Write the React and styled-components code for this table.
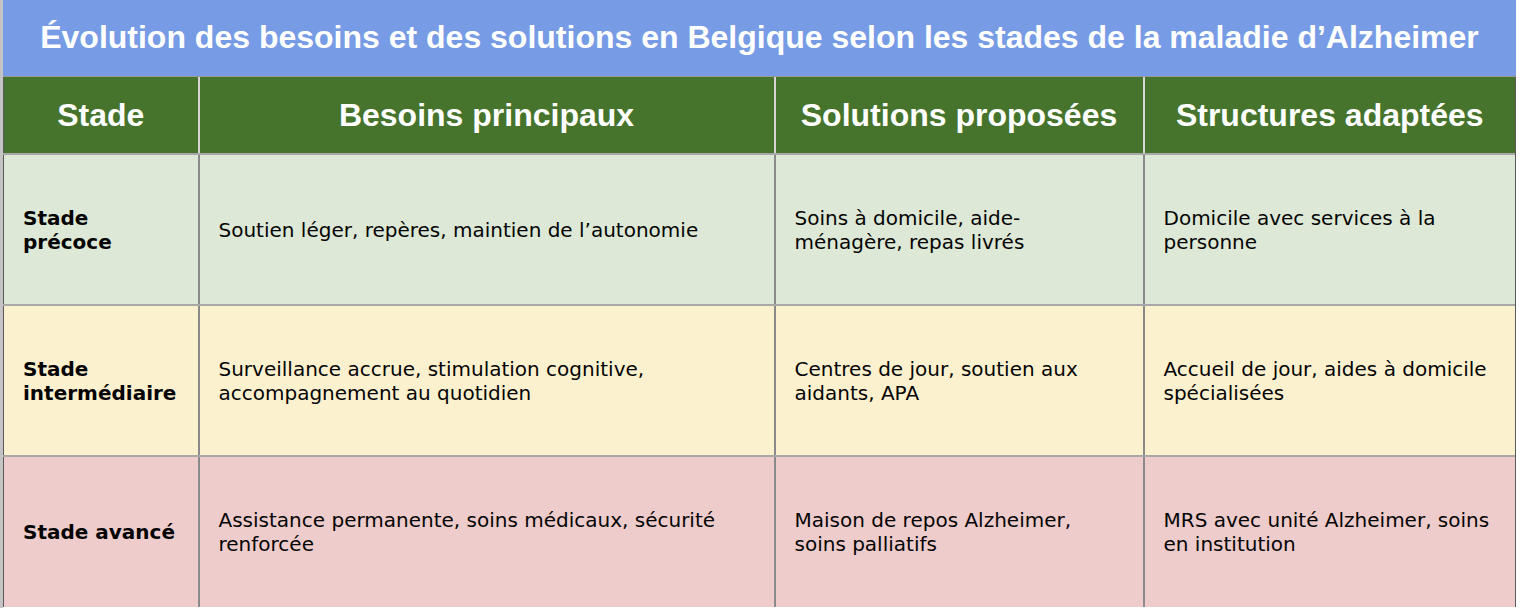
import styled, { createGlobalStyle } from 'styled-components'

const rows = [
    {
        stage: 'Stade précoce',
        bg: '#dde8d6',
        needs: 'Soutien léger, repères, maintien de l’autonomie',
        solutions: 'Soins à domicile, aide-ménagère, repas livrés',
        structures: 'Domicile avec services à la personne',
    },
    {
        stage: 'Stade intermédiaire',
        bg: '#fcf1cf',
        needs: 'Surveillance accrue, stimulation cognitive, accompagnement au quotidien',
        solutions: 'Centres de jour, soutien aux aidants, APA',
        structures: 'Accueil de jour, aides à domicile spécialisées',
    },
    {
        stage: 'Stade avancé',
        bg: '#edcccb',
        needs: 'Assistance permanente, soins médicaux, sécurité renforcée',
        solutions: 'Maison de repos Alzheimer, soins palliatifs',
        structures: 'MRS avec unité Alzheimer, soins en institution',
    },
]

const headers = ['Stade', 'Besoins principaux', 'Solutions proposées', 'Structures adaptées']
const widths = [195, 576, 369, 373]

export default function App() {
    return (
        <>
            <GlobalStyle />
            <Page>
                <TitleBar>Évolution des besoins et des solutions en Belgique selon les stades de la maladie d’Alzheimer</TitleBar>
                <Table>
                    <colgroup>
                        {widths.map((w, i) => (
                            <col key={i} style={{ width: w }} />
                        ))}
                    </colgroup>
                    <thead>
                        <tr>
                            {headers.map((h) => (
                                <HeadCell key={h}>{h}</HeadCell>
                            ))}
                        </tr>
                    </thead>
                    <tbody>
                        {rows.map((row) => (
                            <Row key={row.stage} $bg={row.bg}>
                                <StageCell>{row.stage}</StageCell>
                                <Cell>{row.needs}</Cell>
                                <Cell>{row.solutions}</Cell>
                                <Cell>{row.structures}</Cell>
                            </Row>
                        ))}
                    </tbody>
                </Table>
            </Page>
        </>
    )
}

const GlobalStyle = createGlobalStyle`
    html, body {
        margin: 0;
        padding: 0;
        background: #ffffff;
    }
    body {
        overflow: hidden;
    }
`

const Page = styled.div`
    width: 1513px;
    height: 608px;
    border-left: 3px solid #c4c4c4;
    overflow: hidden;
`

const TitleBar = styled.div`
    height: 74px;
    padding-bottom: 2px;
    background: #779ce5;
    color: #fff;
    font-family: "Liberation Sans", Arial, sans-serif;
    font-weight: bold;
    font-size: 32px;
    display: flex;
    align-items: center;
    justify-content: center;
    border-bottom: 1px solid #9a9a9a;
    white-space: nowrap;
`

const Table = styled.table`
    width: 1513px;
    table-layout: fixed;
    border-collapse: collapse;
    border-left: 1px solid #5a5a5a;
    border-right: 3px solid #5a5a5a;
`

const HeadCell = styled.th`
    height: 76px;
    padding: 0 10px;
    background: #46742c;
    color: #fff;
    font-family: "Liberation Sans", Arial, sans-serif;
    font-weight: bold;
    font-size: 32px;
    text-align: center;
    vertical-align: middle;
    border-left: 2px solid #d6d6d6;
    border-bottom: 2px solid #a8a8a8;
    white-space: nowrap;

    &:first-child {
        border-left: none;
    }
`

const Row = styled.tr`
    background: ${(p) => p.$bg};
    height: 151px;

    &:last-child td {
        border-bottom: none;
    }
`

const Cell = styled.td`
    padding: 0 20px 0 19px;
    font-family: "DejaVu Sans", Verdana, sans-serif;
    font-size: 20px;
    line-height: 24px;
    color: #050505;
    vertical-align: middle;
    border-left: 2px solid #8a8a8a;
    border-bottom: 2px solid #a8a8a8;
`

const StageCell = styled(Cell)`
    font-weight: bold;
    border-left: none;
`
